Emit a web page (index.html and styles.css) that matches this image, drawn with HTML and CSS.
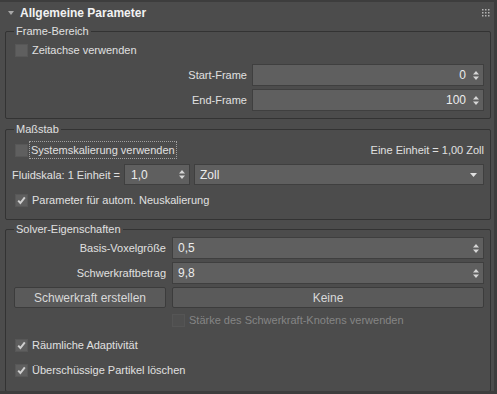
FILE: index.html
```html
<!DOCTYPE html>
<html lang="de">
  <head>
    <meta charset="UTF-8" />
    <meta name="viewport" content="width=device-width, initial-scale=1.0" />
    <title>Allgemeine Parameter</title>
    <link rel="stylesheet" href="styles.css">
  </head>
  <body>
    <div class="rollout">
      <div class="rollout-head">
        <svg class="head-arrow" width="6" height="5" viewBox="0 0 6 5"><path d="M0 0 H6 L3 4 Z" fill="#a8a8a8"/></svg>
        <span class="head-title">Allgemeine Parameter</span>
        <svg class="grip" width="8" height="8" viewBox="0 0 8 8" fill="#b4b4b4">
          <rect x="0" y="0" width="1.5" height="1.5"/><rect x="3" y="0" width="1.5" height="1.5"/><rect x="6" y="0" width="1.5" height="1.5"/>
          <rect x="0" y="3" width="1.5" height="1.5"/><rect x="3" y="3" width="1.5" height="1.5"/><rect x="6" y="3" width="1.5" height="1.5"/>
          <rect x="0" y="6" width="1.5" height="1.5"/><rect x="3" y="6" width="1.5" height="1.5"/><rect x="6" y="6" width="1.5" height="1.5"/>
        </svg>
      </div>

      <!-- Frame-Bereich -->
      <fieldset class="group group-frame">
        <legend>Frame-Bereich</legend>
        <div class="check-row">
          <span class="cb"></span>
          <span>Zeitachse verwenden</span>
        </div>
        <div class="field-grid half">
          <span class="label">Start-Frame</span>
          <div class="spinner right"><span class="value">0</span><span class="arrows"></span></div>
          <span class="label">End-Frame</span>
          <div class="spinner right"><span class="value">100</span><span class="arrows"></span></div>
        </div>
      </fieldset>

      <!-- Maßstab -->
      <fieldset class="group group-scale">
        <legend>Maßstab</legend>
        <div class="check-row split">
          <div class="check-left">
            <span class="cb"></span>
            <span class="focus">Systemskalierung verwenden</span>
          </div>
          <span>Eine Einheit = 1,00 Zoll</span>
        </div>
        <div class="fluid-row">
          <span class="fluid-label">Fluidskala: 1 Einheit =</span>
          <div class="spinner small"><span class="value">1,0</span><span class="arrows"></span></div>
          <div class="dropdown"><span>Zoll</span><span class="drop-arrow"></span></div>
        </div>
        <div class="check-row">
          <span class="cb checked"></span>
          <span>Parameter für autom. Neuskalierung</span>
        </div>
      </fieldset>

      <!-- Solver-Eigenschaften -->
      <fieldset class="group group-solver">
        <legend>Solver-Eigenschaften</legend>
        <div class="field-grid solver">
          <span class="label">Basis-Voxelgröße</span>
          <div class="spinner"><span class="value">0,5</span><span class="arrows"></span></div>
          <span class="label">Schwerkraftbetrag</span>
          <div class="spinner"><span class="value">9,8</span><span class="arrows"></span></div>
          <button class="btn">Schwerkraft erstellen</button>
          <button class="btn">Keine</button>
          <span></span>
          <div class="check-row disabled">
            <span class="cb"></span>
            <span>Stärke des Schwerkraft-Knotens verwenden</span>
          </div>
        </div>
        <div class="check-row">
          <span class="cb checked"></span>
          <span>Räumliche Adaptivität</span>
        </div>
        <div class="check-row">
          <span class="cb checked"></span>
          <span>Überschüssige Partikel löschen</span>
        </div>
      </fieldset>
    </div>
  </body>
</html>
```

FILE: styles.css
```css
* {
  box-sizing: border-box;
}

body {
  margin: 0;
  background-color: #3d3d3d;
  font-family: "Liberation Sans", Arial, sans-serif;
  font-size: 11px;
  color: #e0e0e0;
}

.rollout {
  margin: 2px 3px 0 0;
  height: 389px;
  background-color: #4c4c4c;
  padding: 0 3px 0 5px;
}

.rollout-head {
  height: 22px;
  display: flex;
  align-items: center;
}

.head-arrow {
  margin: 0 6px 0 3px;
}

.head-title {
  flex: 1;
  font-size: 12px;
  font-weight: bold;
  color: #f2f2f2;
}

.grip {
  margin-right: 1px;
  margin-top: -1px;
}

.group {
  margin: 1px 0 0 0;
  border: 1px solid #333333;
  border-radius: 2px;
  padding: 0 6px 0 9px;
  min-width: 0;
}

.group legend {
  padding: 0 2px;
  margin-left: -1px;
  line-height: 13px;
}

.group-frame {
  height: 94px;
}

.group-scale {
  margin-top: 4px;
  height: 97px;
}

.group-solver {
  margin-top: 3px;
  height: 169px;
}

.check-row {
  height: 18px;
  display: flex;
  align-items: center;
  gap: 4px;
}

.group-frame .check-row {
  margin-top: 3px;
}

.check-row.split {
  justify-content: space-between;
  margin-top: 5px;
}

.check-left {
  display: flex;
  align-items: center;
  gap: 2px;
}

.focus {
  outline: 1px dotted #a0a0a0;
  padding: 2px 1px;
}

.cb {
  width: 13px;
  height: 13px;
  flex: none;
  background-color: #5f5f5f;
  border: 1px solid #575757;
}

.cb.checked {
  background-image: url("data:image/svg+xml;utf8,<svg xmlns='http://www.w3.org/2000/svg' width='11' height='11' viewBox='0 0 11 11'><path d='M2.2 5.6 L4.4 8 L8.8 2.4' fill='none' stroke='%23cfcfcf' stroke-width='2'/></svg>");
  background-repeat: no-repeat;
  background-position: center;
}

.check-row.disabled {
  color: #858585;
}

.check-row.disabled .cb {
  background-color: #4f4f4f;
  border-color: #555555;
}

.field-grid {
  display: grid;
  align-items: center;
  column-gap: 5px;
  row-gap: 3px;
}

.field-grid.half {
  grid-template-columns: 1fr 1fr;
  margin-top: 5px;
}

.field-grid.solver {
  grid-template-columns: 152px 1fr;
  margin: 1px 0 1px -1px;
  column-gap: 6px;
}

.label {
  text-align: right;
}

.spinner {
  height: 22px;
  display: flex;
  align-items: center;
  background-color: #5f5f5f;
  border: 1px solid #3f3f3f;
  padding: 0 4px 0 5px;
  color: #ececec;
  font-size: 12px;
}

.spinner .value {
  flex: 1;
}

.spinner.right .value {
  text-align: right;
  margin-right: 7px;
}

.arrows {
  width: 6px;
  height: 9px;
  background-image: url("data:image/svg+xml;utf8,<svg xmlns='http://www.w3.org/2000/svg' width='6' height='9' viewBox='0 0 6 9'><path d='M0 3.5 L3 0 L6 3.5 Z M0 5.5 L6 5.5 L3 9 Z' fill='%23d6d6d6'/></svg>");
}

.fluid-row {
  display: flex;
  align-items: center;
  margin: 5px 0 6px -3px;
  height: 21px;
}

.fluid-label {
  width: 112px;
}

.spinner.small {
  width: 66px;
  height: 21px;
  padding-left: 6px;
}

.dropdown {
  flex: 1;
  margin-left: 4px;
  height: 21px;
  display: flex;
  align-items: center;
  justify-content: space-between;
  background-color: #5f5f5f;
  border: 1px solid #3f3f3f;
  padding: 0 6px 0 5px;
  color: #ececec;
  font-size: 12px;
}

.drop-arrow {
  width: 7px;
  height: 4px;
  background-image: url("data:image/svg+xml;utf8,<svg xmlns='http://www.w3.org/2000/svg' width='7' height='4' viewBox='0 0 7 4'><path d='M0 0 H7 L3.5 4 Z' fill='%23e0e0e0'/></svg>");
}

.btn {
  height: 21px;
  background-color: #5a5a5a;
  border: 1px solid #3c3c3c;
  border-radius: 2px;
  color: #d8d8d8;
  font-family: inherit;
  font-size: 12px;
  padding: 0;
}

.group-solver > .check-row {
  margin-top: 7px;
}
```
